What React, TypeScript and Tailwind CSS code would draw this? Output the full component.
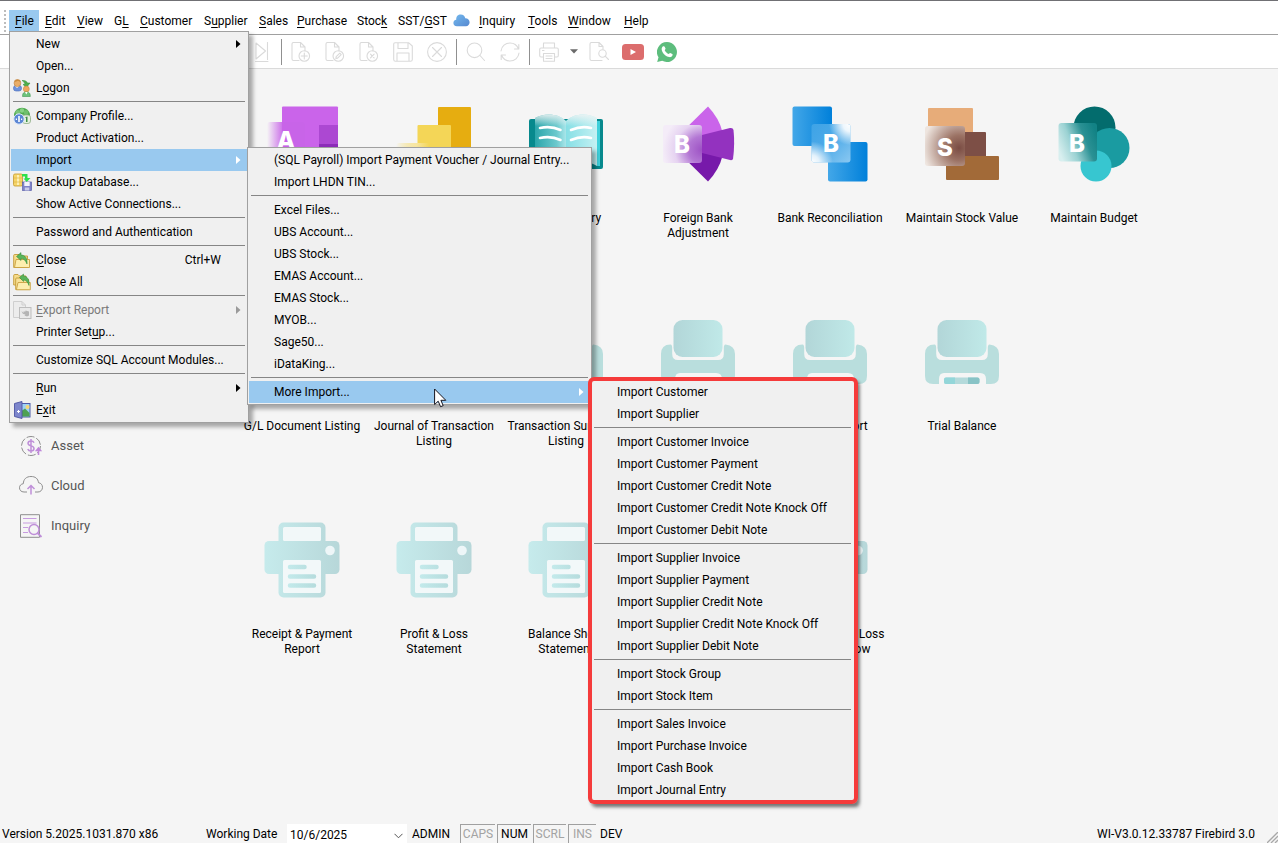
import type { ReactNode } from "react";

type Entry = {
  label?: string;
  accel?: number;
  icon?: ReactNode;
  shortcut?: string;
  arrow?: boolean;
  disabled?: boolean;
  active?: boolean;
  sub?: ReactNode;
};

const SEP: Entry = {};

function Label({ text, accel }: { text: string; accel?: number }) {
  if (accel === undefined) return <>{text}</>;
  return (
    <>
      {text.slice(0, accel)}
      <span className="underline underline-offset-2">{text[accel]}</span>
      {text.slice(accel + 1)}
    </>
  );
}

function Menu({ items, className }: { items: Entry[]; className: string }) {
  return (
    <ul
      role="menu"
      className={`absolute z-10 border border-[#a0a0a0] bg-[#f0f0f0] p-px text-xs text-black shadow-[4px_4px_4px_rgba(0,0,0,0.32)] ${className}`}
    >
      {items.map((it, i) =>
        it.label ? (
          <li key={i} role="none" className="relative">
            <button
              role="menuitem"
              disabled={it.disabled}
              className={`flex h-[22px] w-full items-center whitespace-nowrap pr-1.5 text-left ${
                it.active ? "bg-[#99c9ef]" : ""
              } ${it.disabled ? "text-[#7a7a7a]" : ""}`}
            >
              <span className="flex w-[25px] shrink-0 items-center pl-0.5">{it.icon}</span>
              <span className="grow">
                <Label text={it.label} accel={it.accel} />
              </span>
              {it.shortcut && <span className="pr-5">{it.shortcut}</span>}
              {it.arrow && (
                <svg width="5" height="8" viewBox="0 0 5 8" aria-hidden="true">
                  <path d="M0 0L4.500 4L0 8Z" fill={it.active ? "#fff" : it.disabled ? "#9a9a9a" : "#000"} />
                </svg>
              )}
            </button>
            {it.sub}
          </li>
        ) : (
          <li key={i} role="separator" className="mx-0.5 mt-0.5 mb-[3px] h-px bg-[#868686]" />
        )
      )}
    </ul>
  );
}

/* ---------- menu icons ---------- */

const LogonIcon = (
  <svg width="18" height="18" viewBox="0 0 18 18">
    <rect x="0.500" y="6.500" width="8" height="5.500" rx="2.500" fill="#6d92dc" stroke="#4a6dbb" strokeWidth="0.600" />
    <path d="M2 7L4 9L6.500 7Z" fill="#fff" />
    <rect x="1.200" y="0.600" width="6.500" height="7" rx="3" fill="#e9ad68" stroke="#b77a35" strokeWidth="0.600" />
    <path d="M2 3C2 0 7 0 7.500 3L5 1.800Z" fill="#c98a3b" />
    <path d="M9 1.500C12 1 14 2.500 14.500 4L17 4L13.500 8.500L10 5.500L12 5C11.500 3.500 10.500 2.500 9 1.500Z" fill="#4fae4b" stroke="#2f8b35" strokeWidth="0.500" />
    <circle cx="13.300" cy="10" r="3" fill="#f0a75c" stroke="#c57f38" strokeWidth="0.500" />
    <path d="M9.500 17.500C9.500 14 11 13 13.300 13C16 13 17.300 14 17.300 17.500Z" fill="#6cc27a" stroke="#3f9750" strokeWidth="0.600" />
    <path d="M12 13L13.300 15.500L14.700 13Z" fill="#fff" />
  </svg>
);

const CompanyIcon = (
  <svg width="18" height="18" viewBox="0 0 18 18">
    <path d="M1 8C1 4 5 0.800 9 0.800C13 0.800 17 4 17 8V11H1Z" fill="#4ea94e" />
    <circle cx="4.800" cy="5.500" r="2.400" fill="#7cc47a" />
    <circle cx="9" cy="3.500" r="2.200" fill="#86d284" />
    <circle cx="13" cy="5.500" r="2.400" fill="#6fc06d" />
    <path d="M3 9Q9 6 15 9V13H3Z" fill="#b7e3b3" />
    <rect x="9.500" y="8" width="8" height="8.500" rx="2.500" fill="#e4f0df" stroke="#8fae87" strokeWidth="0.800" />
    <path d="M12.500 10L14.500 9.500V15H13V11H12.500Z" fill="#3f8f46" />
    <circle cx="6" cy="12" r="5.200" fill="#5b86d4" stroke="#dbe7fb" strokeWidth="1" />
    <path d="M5.200 9H6.800V15H5.200ZM2.800 11.500H4V13H2.800ZM8 11.500H9.200V13H8Z" fill="#fff" />
  </svg>
);

const BackupIcon = (
  <svg width="19" height="18" viewBox="0 0 19 18">
    <rect x="0.500" y="1" width="9" height="12" rx="1.500" fill="#f6d568" stroke="#c9a13a" strokeWidth="0.900" />
    <path d="M5 2V12" stroke="#fdf0b5" strokeWidth="2" />
    <path d="M1 5H9M1 9H9" stroke="#dcb548" strokeWidth="0.700" />
    <path d="M9 1H14.500V5H17.500L13.700 9L10.500 5.500H12V3.500H9Z" fill="#2fe04a" />
    <rect x="9.500" y="9" width="9" height="8.500" fill="#7f83c9" stroke="#5c60a8" strokeWidth="0.700" />
    <rect x="11.300" y="9" width="5.400" height="4" fill="#f2f3fc" />
    <rect x="11.800" y="14.500" width="4.500" height="3" fill="#c9cbea" />
  </svg>
);

const FolderIcon = (
  <svg width="18" height="17" viewBox="0 0 18 17">
    <path d="M0.700 3.500Q0.700 2.500 1.700 2.500H6L7.500 4H14.500V15.500H0.700Z" fill="#f6dc8c" stroke="#c39a35" strokeWidth="0.900" />
    <path d="M3 7.500H16.500V15.500H1.500Z" fill="#fdeeaf" stroke="#c9a042" strokeWidth="0.900" />
    <path d="M3.500 4.500L8 0.600V3C12 3 14.500 6 14 12C12.500 8.500 11 6.500 8 6.500V8.500Z" fill="#5ab45a" stroke="#2b8433" strokeWidth="0.500" />
  </svg>
);

const FoldersIcon = (
  <svg width="18" height="18" viewBox="0 0 18 18">
    <path d="M0.700 2.500Q0.700 1.500 1.700 1.500H5L6.500 3H13V12H0.700Z" fill="#f6dc8c" stroke="#c39a35" strokeWidth="0.900" />
    <path d="M2.700 6Q2.700 5 3.700 5H7L8.500 6.500H15.500V16.500H2.700Z" fill="#f8e197" stroke="#c39a35" strokeWidth="0.900" />
    <path d="M5 9.500H17.300V16.800H3.400Z" fill="#fdeeaf" stroke="#c9a042" strokeWidth="0.900" />
    <path d="M6.500 4.500L10.500 1V3C14 3 16.800 6.500 16 12.500C14.800 9 13 7 10.500 7V8.500Z" fill="#5ab45a" stroke="#2b8433" strokeWidth="0.500" />
  </svg>
);

const ExportIcon = (
  <svg width="19" height="18" viewBox="0 0 19 18">
    <path d="M0.500 0.500H9L12.500 4V16.500H0.500Z" fill="#ececec" stroke="#cfcfcf" />
    <path d="M9 0.500V4H12.500" fill="none" stroke="#cfcfcf" />
    <rect x="6.500" y="6.500" width="11.500" height="11" fill="#e9e9e9" stroke="#bdbdbd" />
    <path d="M8.500 10L10.500 12V10.500H12.500V9.500L16 10.500V14.500L14 15.500L11.500 14.500L12.500 13.500C10.500 13.500 9 12.500 8.500 10Z" fill="#b4b4b4" />
  </svg>
);

const ExitIcon = (
  <svg width="18" height="18" viewBox="0 0 18 18">
    <rect x="8" y="2.500" width="9" height="13.500" fill="#9ed2f6" stroke="#4d5aa8" strokeWidth="1" />
    <circle cx="14.500" cy="6" r="2" fill="#f7d774" />
    <path d="M8.500 10L12 7.500L16.500 12V15.500H8.500Z" fill="#4ea153" />
    <path d="M1.500 2.500L9 0.500V17.500L1.500 15.500Z" fill="#7d86cc" stroke="#4d55a3" strokeWidth="0.900" />
    <path d="M5.500 9V12M4 10.500H7" stroke="#fff" strokeWidth="1" />
  </svg>
);

/* ---------- menus ---------- */

const importTypes: Entry[] = [
  { label: "Import Customer" },
  { label: "Import Supplier" },
  SEP,
  { label: "Import Customer Invoice" },
  { label: "Import Customer Payment" },
  { label: "Import Customer Credit Note" },
  { label: "Import Customer Credit Note Knock Off" },
  { label: "Import Customer Debit Note" },
  SEP,
  { label: "Import Supplier Invoice" },
  { label: "Import Supplier Payment" },
  { label: "Import Supplier Credit Note" },
  { label: "Import Supplier Credit Note Knock Off" },
  { label: "Import Supplier Debit Note" },
  SEP,
  { label: "Import Stock Group" },
  { label: "Import Stock Item" },
  SEP,
  { label: "Import Sales Invoice" },
  { label: "Import Purchase Invoice" },
  { label: "Import Cash Book" },
  { label: "Import Journal Entry" },
];

const Pointer = (
  <svg
    width="13"
    height="20"
    viewBox="0 0 13 20"
    aria-hidden="true"
    className="pointer-events-none absolute left-[185px] top-[7px] z-20"
  >
    <path
      d="M0.600 1V16.500L4.200 13.200L6.600 18.700L9.200 17.600L6.900 12.300H11.800Z"
      fill="#fff"
      stroke="#14141e"
      strokeWidth="1"
      strokeLinejoin="round"
    />
  </svg>
);

const importSources: Entry[] = [
  { label: "(SQL Payroll) Import Payment Voucher / Journal Entry..." },
  { label: "Import LHDN TIN..." },
  SEP,
  { label: "Excel Files..." },
  { label: "UBS Account..." },
  { label: "UBS Stock..." },
  { label: "EMAS Account..." },
  { label: "EMAS Stock..." },
  { label: "MYOB..." },
  { label: "Sage50..." },
  { label: "iDataKing..." },
  SEP,
  {
    label: "More Import...",
    arrow: true,
    active: true,
    sub: (
      <>
        {Pointer}
        <Menu items={importTypes} className="left-full -top-0.5 w-[265px]" />
        <div className="pointer-events-none absolute left-full -top-1 z-20 -ml-0.5 h-[427px] w-[270px] rounded-md border-4 border-[#f53b3b] shadow-[2px_3px_3px_rgba(0,0,0,0.3)]" />
      </>
    ),
  },
];

const fileMenu: Entry[] = [
  { label: "New", arrow: true },
  { label: "Open..." },
  { label: "Logon", accel: 1, icon: LogonIcon },
  SEP,
  { label: "Company Profile...", icon: CompanyIcon },
  { label: "Product Activation..." },
  {
    label: "Import",
    arrow: true,
    active: true,
    sub: <Menu items={importSources} className="left-full -top-0.5 w-[345px]" />,
  },
  { label: "Backup Database...", icon: BackupIcon },
  { label: "Show Active Connections..." },
  SEP,
  { label: "Password and Authentication" },
  SEP,
  { label: "Close", accel: 0, icon: FolderIcon, shortcut: "Ctrl+W" },
  { label: "Close All", accel: 1, icon: FoldersIcon },
  SEP,
  { label: "Export Report", accel: 0, icon: ExportIcon, arrow: true, disabled: true },
  { label: "Printer Setup...", accel: 11 },
  SEP,
  { label: "Customize SQL Account Modules..." },
  SEP,
  { label: "Run", accel: 0, arrow: true },
  { label: "Exit", accel: 1, icon: ExitIcon },
];

const CloudIcon = (
  <svg width="17" height="13" viewBox="0 0 17 13" aria-hidden="true">
    <defs>
      <linearGradient id="cloud" x1="0" y1="0" x2="1" y2="1">
        <stop offset="0" stopColor="#74b9ee" />
        <stop offset="1" stopColor="#5588d0" />
      </linearGradient>
    </defs>
    <path d="M4 12.300C1.500 12.300 0.400 10.600 0.400 9C0.400 7.300 1.500 6 3.200 5.800C3 2.500 5 0.600 7.800 0.600C10.200 0.600 11.800 2 12.300 4.300C15 4.300 16.600 6 16.600 8.300C16.600 10.600 15 12.300 13 12.300Z" fill="url(#cloud)" />
  </svg>
);

const menuBar: { label: string; accel?: number; width: string; icon?: ReactNode }[] = [
  { label: "File", accel: 0, width: "w-[30px]" },
  { label: "Edit", accel: 0, width: "w-8" },
  { label: "View", accel: 0, width: "w-[37px]" },
  { label: "GL", accel: 1, width: "w-[26px]" },
  { label: "Customer", accel: 0, width: "w-16" },
  { label: "Supplier", accel: 1, width: "w-[55px]" },
  { label: "Sales", accel: 0, width: "w-[38px]" },
  { label: "Purchase", accel: 0, width: "w-[60px]" },
  { label: "Stock", accel: 4, width: "w-[41px]" },
  { label: "SST/GST", accel: 4, width: "w-[55px]" },
  { label: "Cloud", width: "w-[26px]", icon: CloudIcon },
  { label: "Inquiry", accel: 0, width: "w-[49px]" },
  { label: "Tools", accel: 0, width: "w-10" },
  { label: "Window", accel: 0, width: "w-14" },
  { label: "Help", accel: 0, width: "w-9" },
];

/* ---------- toolbar ---------- */

function ToolSvg({ children }: { children: ReactNode }) {
  return (
    <svg width="20" height="20" viewBox="0 0 20 20" fill="none" stroke="#dadada" strokeWidth="1.100" strokeLinejoin="round" strokeLinecap="round">
      {children}
    </svg>
  );
}

const docPath = "M8 18.500H2.500Q1 18.500 1 17V2Q1 0.500 2.500 0.500H9.500L14 5V9M9.500 0.500V5H14";

const tools: { name: string; art?: ReactNode }[] = [
  { name: "Last", art: <ToolSvg><path d="M4 1L13.500 9L4 17ZM15.500 0.500V17.500M3.500 19.500H16" /></ToolSvg> },
  { name: "sep" },
  { name: "New", art: <ToolSvg><path d={docPath} /><circle cx="13.300" cy="14" r="5.300" /><path d="M13.300 11V17M10.300 14H16.300" /></ToolSvg> },
  { name: "Edit", art: <ToolSvg><path d={docPath} /><circle cx="13.300" cy="14" r="5.300" /><path d="M10.800 16.500L11.200 14.700L14.800 11.200L16.200 12.600L12.600 16.100Z" /></ToolSvg> },
  { name: "Delete", art: <ToolSvg><path d={docPath} /><circle cx="13.300" cy="14" r="5.300" /><path d="M11.500 12.200L15.100 15.800M15.100 12.200L11.500 15.800" /></ToolSvg> },
  { name: "Save", art: <ToolSvg><path d="M2 0.700H15.500L19.300 4V17.500Q19.300 19.300 17.500 19.300H2.500Q0.700 19.300 0.700 17.500V2Q0.700 0.700 2 0.700ZM5 0.700V6.500H15V0.700M4 19.300V11H16V19.300" /></ToolSvg> },
  { name: "Cancel", art: <ToolSvg><circle cx="10" cy="10" r="9.400" /><path d="M5.500 5.500L14.500 14.500M14.500 5.500L5.500 14.500" /></ToolSvg> },
  { name: "sep" },
  { name: "Find", art: <ToolSvg><circle cx="8.500" cy="8.300" r="7.300" /><path d="M14 13.500L18.500 18.500" /></ToolSvg> },
  { name: "Refresh", art: <ToolSvg><path d="M1 9C1.500 4 5.500 1 10 1C14 1 17 3 18.500 7M18.800 2.500V7H14.500M19 11C18.500 16 14.500 19 10 19C6 19 3 17 1.500 13M1.200 17.500V13H5.500" /></ToolSvg> },
  { name: "sep" },
  { name: "Print", art: <ToolSvg><path d="M4.500 6V1H15.500V6M4.500 15H2Q0.700 15 0.700 13.500V7.500Q0.700 6 2 6H18Q19.300 6 19.300 7.500V13.500Q19.300 15 18 15H15.500M4.500 11.500H15.500V19.300H4.500ZM7 14H13M7 16.500H13M3.500 8.500H5" /></ToolSvg> },
  { name: "arrow" },
  { name: "Preview", art: <ToolSvg><path d="M13 18.500H2.500Q1 18.500 1 17V2Q1 0.500 2.500 0.500H10L14 4.500V7M10 0.500V4.500H14" /><circle cx="13.500" cy="11.500" r="3.700" /><path d="M16.200 14.200L19.500 17.500" /></ToolSvg> },
];

const YouTube = (
  <svg width="22" height="16" viewBox="0 0 22 16">
    <rect width="22" height="16" rx="3.500" fill="#dc6d6d" />
    <path d="M8.500 5L14 8L8.500 11Z" fill="#fff" />
  </svg>
);

const WhatsApp = (
  <svg width="20" height="20" viewBox="0 0 20 20">
    <path d="M10 0A10 10 0 1 1 5.200 18.800L0.200 20L1.500 15.300A10 10 0 0 1 10 0Z" fill="#5dbd7d" />
    <path d="M6.200 4.300C6.800 4 7.400 4.100 7.700 4.700L8.500 6.600C8.600 7.200 8.100 7.700 7.700 8.200C8.600 10 10 11.300 11.800 12.100C12.300 11.600 12.700 10.900 13.200 11L15.300 12C15.800 12.300 15.600 13 15.400 13.600C14.900 14.800 13.500 15.300 12.300 15.100C8.700 14.400 5.300 11.100 4.700 7.700C4.500 6.300 5.100 4.900 6.200 4.300Z" fill="#fff" />
  </svg>
);

/* ---------- desktop tiles ---------- */

function TileSvg({ children }: { children: ReactNode }) {
  return (
    <svg width="76" height="76" viewBox="0 0 76 76" aria-hidden="true">
      {children}
    </svg>
  );
}

function Glyph({ x, y, children }: { x: number; y: number; children: string }) {
  return (
    <text x={x} y={y} textAnchor="middle" fill="#fff" className="font-['Inter',sans-serif] text-2xl font-extrabold">
      {children}
    </text>
  );
}

const AccountArt = (
  <TileSvg>
    <defs>
      <linearGradient id="acc">
        <stop offset="0" stopColor="#c864e8" stopOpacity="0" />
        <stop offset="0.450" stopColor="#c864e8" />
        <stop offset="1" stopColor="#c864e8" />
      </linearGradient>
    </defs>
    <rect x="18" y="0.500" width="56" height="56" rx="1" fill="#ca64ea" />
    <rect x="55" y="19" width="19" height="19" fill="#ac48d2" />
    <rect x="55" y="38" width="19" height="19" fill="#8c2cb8" />
    <rect x="3" y="16" width="38" height="38" rx="3" fill="url(#acc)" />
    <Glyph x={22} y={43}>A</Glyph>
  </TileSvg>
);

const CashBookArt = (
  <TileSvg>
    <defs>
      <linearGradient id="cash">
        <stop offset="0" stopColor="#f4d85c" stopOpacity="0" />
        <stop offset="0.600" stopColor="#f7e6a2" />
        <stop offset="1" stopColor="#f3d552" />
      </linearGradient>
    </defs>
    <rect x="42" y="1" width="33" height="74" rx="1" fill="#e6ad10" />
    <rect x="21.500" y="19" width="33.500" height="56" rx="1" fill="#f4d657" />
    <rect x="0" y="37" width="34" height="38" rx="3" fill="url(#cash)" />
  </TileSvg>
);

const BookArt = (
  <TileSvg>
    <defs>
      <linearGradient id="pageL">
        <stop offset="0" stopColor="#2ba5aa" />
        <stop offset="0.700" stopColor="#6cc9cd" />
        <stop offset="1" stopColor="#a8e6ea" />
      </linearGradient>
      <linearGradient id="pageR">
        <stop offset="0" stopColor="#86dfe5" />
        <stop offset="1" stopColor="#c4f1f3" />
      </linearGradient>
      <linearGradient id="shine" x1="0" y1="0" x2="0" y2="1">
        <stop offset="0" stopColor="#f4f4f4" stopOpacity="0.850" />
        <stop offset="1" stopColor="#f4f4f4" stopOpacity="0" />
      </linearGradient>
    </defs>
    <rect x="1" y="13" width="74" height="50" rx="2" fill="#07898d" />
    <rect x="69" y="15" width="3" height="45" fill="#3fd0da" />
    <path d="M7 12C16 7 30 7 38 15V62C30 54 16 54 7 60Z" fill="url(#pageL)" />
    <path d="M38 15C46 7 60 7 69 12V60C60 54 46 54 38 62Z" fill="url(#pageR)" />
    <path d="M7 12C16 7 30 7 38 15C46 7 60 7 69 12V20H7Z" fill="url(#shine)" />
    <path d="M12 22C19 20.500 26 21 32.500 24M12 32C19 30.500 26 31 32.500 34M43 24C50 21 57 20.500 63 22M43 34C50 31 57 30.500 63 32" fill="none" stroke="#fff" strokeWidth="2.600" strokeLinecap="round" />
  </TileSvg>
);

const ForeignArt = (
  <TileSvg>
    <defs>
      <radialGradient id="fan" cx="1" cy="0.650" r="1">
        <stop offset="0" stopColor="#9d52c4" />
        <stop offset="0.350" stopColor="#b377d4" />
        <stop offset="0.700" stopColor="#e6d3f1" />
        <stop offset="1" stopColor="#f4ecf8" />
      </radialGradient>
    </defs>
    <path d="M10 38L48 0.500Q59 12 62.500 26L38 38Z" fill="#ca64ea" />
    <path d="M10 38L48 75.500Q59 64 62.500 50L38 38Z" fill="#7719aa" />
    <path d="M6 38L70 22Q73 21.500 73.500 24Q75 38 73 53Q72.500 54.500 70 54Z" fill="#9332bf" />
    <rect x="3" y="19" width="39" height="38" rx="3" fill="url(#fan)" />
    <Glyph x={22} y={47}>B</Glyph>
  </TileSvg>
);

const ReconArt = (
  <TileSvg>
    <defs>
      <linearGradient id="blue">
        <stop offset="0" stopColor="#43a7e8" />
        <stop offset="1" stopColor="#0080da" />
      </linearGradient>
      <radialGradient id="hiTop" cx="1" cy="0" r="0.550">
        <stop offset="0" stopColor="#fff" />
        <stop offset="0.350" stopColor="#fff" stopOpacity="0.900" />
        <stop offset="1" stopColor="#fff" stopOpacity="0" />
      </radialGradient>
      <radialGradient id="hiBottom" cx="0" cy="1" r="0.550">
        <stop offset="0" stopColor="#fff" />
        <stop offset="0.350" stopColor="#fff" stopOpacity="0.850" />
        <stop offset="1" stopColor="#fff" stopOpacity="0" />
      </radialGradient>
      <linearGradient id="glass" x1="0" y1="0" x2="1" y2="1">
        <stop offset="0" stopColor="#3ea3e6" />
        <stop offset="0.450" stopColor="#4ba9e8" />
        <stop offset="1" stopColor="#8ac8f1" />
      </linearGradient>
    </defs>
    <rect x="0.500" y="0.500" width="39.500" height="39.500" rx="2" fill="url(#blue)" />
    <rect x="36" y="36" width="39.500" height="39.500" rx="2" fill="url(#blue)" />
    <rect x="19.500" y="18" width="39" height="38.500" rx="3" fill="url(#glass)" />
    <rect x="19.500" y="18" width="39" height="38.500" rx="3" fill="url(#hiTop)" />
    <rect x="19.500" y="18" width="39" height="38.500" rx="3" fill="url(#hiBottom)" />
    <Glyph x={39} y={46}>B</Glyph>
  </TileSvg>
);

const StockArt = (
  <TileSvg>
    <defs>
      <radialGradient id="brown" cx="0.850" cy="0.550" r="0.900">
        <stop offset="0" stopColor="#7a4c43" />
        <stop offset="0.350" stopColor="#9b7264" />
        <stop offset="1" stopColor="#eee5df" />
      </radialGradient>
    </defs>
    <rect x="4" y="2" width="45" height="40" rx="1" fill="#e7ac79" />
    <rect x="30" y="26" width="32" height="26" rx="1" fill="#7d4f46" />
    <rect x="22" y="50" width="53" height="24" rx="1" fill="#a26a38" />
    <rect x="1" y="20" width="40" height="40" rx="3" fill="url(#brown)" />
    <Glyph x={21} y={50}>S</Glyph>
  </TileSvg>
);

const BudgetArt = (
  <TileSvg>
    <defs>
      <linearGradient id="teal" x1="0" y1="0.700" x2="1" y2="0.300">
        <stop offset="0" stopColor="#d8efef" />
        <stop offset="0.350" stopColor="#9bd2d3" />
        <stop offset="0.700" stopColor="#2b9194" />
        <stop offset="1" stopColor="#128285" />
      </linearGradient>
    </defs>
    <circle cx="38.500" cy="21.500" r="21" fill="#036c6d" />
    <circle cx="53.500" cy="42" r="20" fill="#1a9ba1" />
    <circle cx="40" cy="60" r="15.500" fill="#37c6d0" />
    <rect x="2.500" y="17" width="38.500" height="38.500" rx="3" fill="url(#teal)" />
    <Glyph x={21} y={46}>B</Glyph>
  </TileSvg>
);

const ListingArt = (
  <TileSvg>
    <defs>
      <linearGradient id="tray">
        <stop offset="0" stopColor="#b2d6d8" />
        <stop offset="1" stopColor="#c0e9e8" />
      </linearGradient>
    </defs>
    <rect x="13.500" y="6" width="49" height="37" rx="9" fill="url(#tray)" />
    <path d="M1 40Q1 30.500 10.500 30.500Q12.200 30.500 12.200 34V40Q12.200 46 18 46H58Q63.800 46 63.800 40V34Q63.800 30.500 65.500 30.500Q75 31.500 75 40V62Q75 70 67 70H62V65Q62 59 56 59H20Q15 59 15 65V70H9Q1 70 1 62Z" fill="#b9dedd" />
    <rect x="20" y="63.500" width="35.500" height="6.500" rx="2" fill="#b4dadb" />
    <path d="M22 63.500H31V70H22Q20 70 20 68V65.500Q20 63.500 22 63.500Z" fill="#93d6d9" />
    <path d="M44 63.500H53.500Q55.500 63.500 55.500 65.500V68Q55.500 70 53.500 70H44Z" fill="#88c3c6" />
  </TileSvg>
);

const ReportArt = (
  <TileSvg>
    <defs>
      <linearGradient id="rep" gradientUnits="userSpaceOnUse" x1="0" y1="0" x2="76" y2="0">
        <stop offset="0" stopColor="#c6ebec" />
        <stop offset="1" stopColor="#b7d7d9" />
      </linearGradient>
      <linearGradient id="line" gradientUnits="userSpaceOnUse" x1="24" y1="0" x2="52" y2="0">
        <stop offset="0" stopColor="#c3eaeb" />
        <stop offset="1" stopColor="#b5dcdd" />
      </linearGradient>
    </defs>
    <rect x="0.500" y="19" width="75" height="33" rx="4.500" fill="url(#rep)" />
    <rect x="14.500" y="0.500" width="47" height="75" rx="5" fill="url(#rep)" />
    <rect x="19" y="5" width="38" height="14" rx="1.500" fill="#f2f8f9" />
    <rect x="19" y="38" width="38" height="33" rx="1.500" fill="#f2f8f9" />
    <circle cx="66" cy="28.500" r="4.800" fill="#eef6f8" />
    <path d="M26 45H40.500M26 54.500H50M26 63.500H50" stroke="url(#line)" strokeWidth="4.500" strokeLinecap="round" fill="none" />
  </TileSvg>
);

const tiles: { art: ReactNode; lines: string[] }[][] = [
  [
    { art: AccountArt, lines: [] },
    { art: CashBookArt, lines: [] },
    { art: BookArt, lines: ["Journal Entry"] },
    { art: ForeignArt, lines: ["Foreign Bank", "Adjustment"] },
    { art: ReconArt, lines: ["Bank Reconciliation"] },
    { art: StockArt, lines: ["Maintain Stock Value"] },
    { art: BudgetArt, lines: ["Maintain Budget"] },
  ],
  [
    { art: ListingArt, lines: ["G/L Document Listing"] },
    { art: ListingArt, lines: ["Journal of Transaction", "Listing"] },
    { art: ListingArt, lines: ["Transaction Summary", "Listing"] },
    { art: ListingArt, lines: [] },
    { art: ListingArt, lines: ["Ledger Report"] },
    { art: ListingArt, lines: ["Trial Balance"] },
  ],
  [
    { art: ReportArt, lines: ["Receipt & Payment", "Report"] },
    { art: ReportArt, lines: ["Profit & Loss", "Statement"] },
    { art: ReportArt, lines: ["Balance Sheet", "Statement"] },
    { art: ReportArt, lines: [] },
    { art: ReportArt, lines: ["Project Profit & Loss", "with Cash Flow"] },
  ],
];

/* ---------- sidebar ---------- */

const sidebar: { label: string; art: ReactNode }[] = [
  {
    label: "Asset",
    art: (
      <svg width="24" height="24" viewBox="0 0 24 24" fill="none">
        <circle cx="12" cy="12" r="9.500" stroke="#8e8e8e" strokeWidth="1" strokeDasharray="8 2" />
        <path d="M15 8.800C14.500 7.500 13.500 7 12 7C10.300 7 9 7.800 9 9.300C9 12.800 15 11 15 14.500C15 16 13.800 17 12 17C10.300 17 9.200 16.300 8.800 15M12 5V19" stroke="#bf8fd8" strokeWidth="1.500" />
        <path d="M19.500 21V15M17.500 16.500L19.500 14L21.500 16.500Z" stroke="#bf86da" strokeWidth="1.600" />
      </svg>
    ),
  },
  {
    label: "Cloud",
    art: (
      <svg width="24" height="24" viewBox="0 0 24 24" fill="none">
        <path d="M8 18H5C2 18 0.500 16 0.500 13.800C0.500 11.500 2 10 4.300 9.700C4.500 5 7.500 2.500 12 2.500C16.300 2.500 19 4.500 19.500 8.700C22 9 23.500 11 23.500 13.300C23.500 16 21.500 18 19 18H16" stroke="#8e8e8e" />
        <path d="M12 20.500V12M8.500 15L12 11.500L15.500 15" stroke="#bf8fd8" strokeWidth="1.500" />
      </svg>
    ),
  },
  {
    label: "Inquiry",
    art: (
      <svg width="24" height="24" viewBox="0 0 24 24" fill="none">
        <path d="M1.500 0.700H20.500V23.300H1.500Z" stroke="#8e8e8e" />
        <path d="M4 4.500H17.500M4 9H17.500M4 13.500H9M4 18.500H9" stroke="#c79be0" />
        <circle cx="15" cy="15.500" r="5" stroke="#bf8fd8" strokeWidth="1.500" />
        <path d="M18.500 19L22.500 23" stroke="#bf8fd8" strokeWidth="1.800" />
      </svg>
    ),
  },
];

const indicators = [
  { label: "CAPS", on: false, width: "w-[35px]" },
  { label: "NUM", on: true, width: "w-[34px]" },
  { label: "SCRL", on: false, width: "w-[33px]" },
  { label: "INS", on: false, width: "w-7" },
];

export default function App() {
  return (
    <div className="flex min-h-screen flex-col overflow-hidden bg-[#f5f5f5] font-['Roboto',sans-serif] text-xs text-black">
      <nav className="flex h-[35px] items-start border-t border-b border-t-[#707074] border-b-[#a0a0a0] bg-white pt-[9px]">
        <div className="ml-1 mr-[3px] h-[22px] w-0.5 border-l-2 border-dotted border-[#bdbdbd]" />
        {menuBar.map((m, i) => (
          <div key={m.label} className={`relative ${m.width}`}>
            <button
              aria-label={m.icon ? m.label : undefined}
              className={`flex h-[21px] w-full items-center whitespace-nowrap pl-1.5 ${i === 0 ? "bg-[#99c9ef]" : ""}`}
            >
              {m.icon ?? <span><Label text={m.label} accel={m.accel} /></span>}
            </button>
            {i === 0 && <Menu items={fileMenu} className="left-0 top-full w-60" />}
          </div>
        ))}
      </nav>

      <div className="flex h-[34px] items-center border-b border-[#dadada] bg-white pl-[245px]">
        {tools.map((t, i) => {
          if (t.name === "sep") return <div key={i} className="mx-0.5 h-[26px] w-px shrink-0 bg-[#909090]" />;
          if (t.name === "arrow")
            return (
              <button key={i} aria-label="Print options" className="flex w-4 justify-center">
                <svg width="8" height="5" viewBox="0 0 8 5">
                  <path d="M0 0.300H8L4 4.500Z" fill="#6a6a6a" />
                </svg>
              </button>
            );
          return (
            <button key={i} aria-label={t.name} className="flex w-[34px] shrink-0 justify-center">
              {t.art}
            </button>
          );
        })}
        <button aria-label="YouTube" className="flex w-[34px] justify-center">{YouTube}</button>
        <button aria-label="WhatsApp" className="flex w-[34px] justify-center">{WhatsApp}</button>
      </div>

      <div className="flex grow">
        <aside className="flex w-[236px] shrink-0 flex-col pt-[357px]">
          {sidebar.map((s) => (
            <a key={s.label} href="#" className="flex h-10 items-center gap-2 pl-[19px] text-[13px] text-[#555]">
              {s.art}
              {s.label}
            </a>
          ))}
        </aside>
        <main className="flex flex-col pt-[37px]">
          {tiles.map((row, r) => (
            <div key={r} className="flex h-52">
              {row.map((t, c) => (
                <button key={c} className="flex w-[132px] flex-col items-center gap-[29px] leading-[15px]">
                  {t.art}
                  <span className="whitespace-nowrap">
                    {t.lines.map((l) => (
                      <span key={l} className="block">{l}</span>
                    ))}
                  </span>
                </button>
              ))}
            </div>
          ))}
        </main>
      </div>

      <footer className="flex h-[19px] items-center whitespace-nowrap pl-0.5">
        <span className="w-[204px]">Version 5.2025.1031.870 x86</span>
        <label htmlFor="working-date" className="w-[81px]">Working Date</label>
        <div className="relative flex h-full w-[120px] items-center bg-white">
          <select id="working-date" className="h-full w-full appearance-none bg-white pl-[3px] pt-1 leading-[15px]">
            <option>10/6/2025</option>
          </select>
          <svg width="9" height="6" viewBox="0 0 9 6" fill="none" className="pointer-events-none absolute right-1 bottom-1">
            <path d="M0.500 0.800L4.500 4.800L8.500 0.800" stroke="#555" />
          </svg>
        </div>
        <span className="w-[53px] pl-[5px]">ADMIN</span>
        <div className="flex h-full gap-0.5">
          {indicators.map((s) => (
            <span
              key={s.label}
              className={`flex items-center justify-center border-l border-t border-[#a0a0a0] ${s.width} ${s.on ? "" : "text-[#a3a3a3]"}`}
            >
              {s.label}
            </span>
          ))}
        </div>
        <span className="pl-1">DEV</span>
        <span className="ml-auto pr-3">WI-V3.0.12.33787 Firebird 3.0</span>
        <svg width="11" height="11" viewBox="0 0 11 11" className="self-end" stroke="#a8a8a8" aria-hidden="true">
          <path d="M0 11L11 0M4 11L11 4M8 11L11 8" strokeWidth="1.300" />
        </svg>
      </footer>
    </div>
  );
}
